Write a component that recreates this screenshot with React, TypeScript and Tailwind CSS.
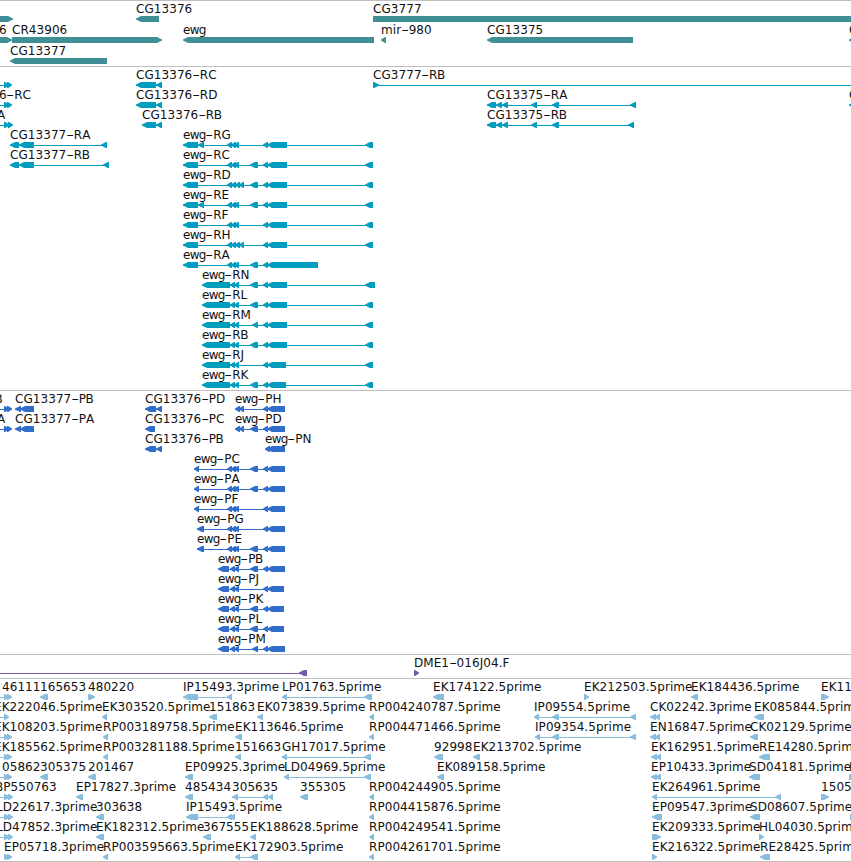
type Exon = [number, number];

interface Feature {
  x: number;
  label?: string;
  dir?: "l" | "r";
  exons?: Exon[];
  /** x range of the connecting line, when it runs past the exons */
  line?: Exon;
}

interface Track {
  name: string;
  color: string;
  rowClass: string;
  padClass: string;
  rows: Feature[][];
}

const left = (label: string, ...exons: Exon[]): Feature => ({ x: exons[0][0], label, exons });
const right = (label: string, ...exons: Exon[]): Feature => ({ x: exons[0][0], label, exons, dir: "r" });
const cut = (x: number, label: string, exons: Exon[]): Feature => ({
  x,
  label,
  exons,
  dir: "r",
  line: [0, exons[0][0]],
});

const TWO: Exon[] = [[4, 9], [7, 12]];
const TWO_WIDE: Exon[] = [[4, 10], [8, 13]];

const TRIPLE: Exon[] = [[227, 232], [231, 236], [234, 239]];
const QUAD: Exon[] = [[227, 232], [231, 236], [235, 240], [239, 244]];
const PAIR: Exon[] = [[230, 235], [234, 239]];
const MID: Exon = [250, 258];
const MID_SHORT: Exon = [252, 258];
const PRE: Exon = [263, 268];
const BODY: Exon = [267, 287];
const BODY_SHORT: Exon = [267, 286];
const END: Exon = [365, 373];
const START: Exon = [183, 198];
const SMALL: Exon = [198, 204];
const LONG_START: Exon = [202, 230];

const P_BODY: Exon = [267, 285];
const P_BODY_SHORT: Exon = [267, 284];
const P_START: Exon = [218, 229];

const genes: Feature[][] = [
  [
    { x: 0, dir: "r", exons: [[-10, 13]] },
    left("CG13376", [136, 159]),
    { x: 373, label: "CG3777", dir: "r", exons: [[373, 870]] },
  ],
  [
    { x: -1, label: "6", dir: "r", exons: [[-10, 12]] },
    right("CR43906", [12, 162]),
    left("ewg", [183, 374]),
    left("mir-980", [381, 386]),
    left("CG13375", [487, 633]),
    left("C", [849, 880]),
  ],
  [left("CG13377", [10, 107])],
];

const transcripts: Feature[][] = [
  [
    cut(0, "", TWO),
    left("CG13376-RC", [136, 156], [156, 162]),
    { x: 373, label: "CG3777-RB", dir: "r", exons: [[373, 379]], line: [373, 851] },
  ],
  [
    cut(-1, "6-RC", TWO),
    left("CG13376-RD", [136, 156], [156, 162]),
    left("CG13375-RA", [487, 496], [496, 502], [502, 508], [531, 537], [552, 559], [630, 636]),
    left("C", [849, 880]),
  ],
  [
    cut(-3, "A", TWO_WIDE),
    left("CG13376-RB", [142, 156], [156, 162]),
    left("CG13375-RB", [487, 496], [496, 502], [502, 508], [531, 537], [552, 559], [628, 634]),
  ],
  [left("CG13377-RA", [10, 19], [19, 34], [101, 107]), left("ewg-RG", START, SMALL, ...TRIPLE, PRE, BODY, END)],
  [left("CG13377-RB", [10, 19], [19, 34], [103, 109]), left("ewg-RC", START, ...TRIPLE, MID, PRE, BODY, END)],
  [left("ewg-RD", START, ...QUAD, MID, PRE, BODY, END)],
  [left("ewg-RE", START, SMALL, ...TRIPLE, MID, PRE, BODY, END)],
  [left("ewg-RF", START, ...TRIPLE, PRE, BODY, END)],
  [left("ewg-RH", START, ...QUAD, PRE, BODY, END)],
  [left("ewg-RA", START, ...TRIPLE, MID, PRE, [267, 318])],
  [left("ewg-RN", LONG_START, ...PAIR, MID, PRE, BODY, [365, 375])],
  [left("ewg-RL", LONG_START, ...PAIR, MID, PRE, BODY, END)],
  [left("ewg-RM", LONG_START, ...PAIR, MID_SHORT, PRE, BODY, END)],
  [left("ewg-RB", LONG_START, ...PAIR, MID, PRE, BODY, END)],
  [left("ewg-RJ", LONG_START, ...PAIR, PRE, BODY_SHORT, END)],
  [left("ewg-RK", LONG_START, ...PAIR, MID, PRE, BODY_SHORT, END)],
];

const proteins: Feature[][] = [
  [
    cut(-5, "B", TWO),
    left("CG13377-PB", [15, 21], [20, 34]),
    left("CG13376-PD", [145, 156], [156, 162]),
    left("ewg-PH", [235, 240], [239, 244], PRE, P_BODY),
  ],
  [
    cut(-3, "A", TWO),
    left("CG13377-PA", [15, 21], [20, 34]),
    left("CG13376-PC", [145, 155]),
    left("ewg-PD", [235, 240], [239, 244], MID, PRE, P_BODY),
  ],
  [left("CG13376-PB", [145, 156], [156, 162]), left("ewg-PN", [265, 270], P_BODY)],
  [left("ewg-PC", [194, 199], ...TRIPLE, MID, PRE, P_BODY)],
  [left("ewg-PA", [194, 199], ...TRIPLE, MID, PRE, P_BODY)],
  [left("ewg-PF", [194, 199], ...TRIPLE, PRE, P_BODY)],
  [left("ewg-PG", [197, 204], ...TRIPLE, PRE, P_BODY)],
  [left("ewg-PE", [197, 204], ...TRIPLE, MID, PRE, P_BODY)],
  [left("ewg-PB", P_START, ...PAIR, MID, PRE, P_BODY)],
  [left("ewg-PJ", P_START, ...PAIR, PRE, P_BODY_SHORT)],
  [left("ewg-PK", P_START, ...PAIR, MID, PRE, P_BODY_SHORT)],
  [left("ewg-PL", P_START, ...PAIR, MID, PRE, P_BODY_SHORT)],
  [left("ewg-PM", P_START, ...PAIR, MID_SHORT, PRE, P_BODY)],
];

const clones: Feature[][] = [
  [{ x: 0, exons: [[299, 307]], line: [0, 300] }, right("DME1-016J04.F", [414, 419])],
];

const ests: Feature[][] = [
  [
    cut(2, "46111", TWO),
    left("165653", [40, 48]),
    right("480220", [88, 95]),
    left("IP15493.3prime", [183, 198], [227, 232]),
    left("LP01763.5prime", [282, 287], [364, 372]),
    left("EK174122.5prime", [433, 444]),
    right("EK212503.5prime", [584, 589]),
    left("EK184436.5prime", [691, 698]),
    right("EK112345", [821, 829]),
  ],
  [
    cut(-6, "EK222046.5prime", [[4, 9]]),
    left("EK303520.5prime", [102, 107]),
    left("151863", [209, 217]),
    left("EK073839.5prime", [257, 263]),
    left("RP004240787.5prime", [369, 374]),
    left("IP09554.5prime", [534, 539], [552, 559], [630, 636]),
    left("CK02242.3prime", [650, 656], [655, 660]),
    left("EK085844.5prime", [754, 764]),
  ],
  [
    cut(-6, "EK108203.5prime", TWO),
    left("RP003189758.5prime", [103, 108]),
    left("EK113646.5prime", [235, 242]),
    left("RP004471466.5prime", [369, 374]),
    left("IP09354.5prime", [535, 540], [552, 559], [630, 636]),
    left("EN16847.5prime", [650, 656], [655, 660]),
    left("CK02129.5prime", [750, 758]),
  ],
  [
    cut(-6, "EK185562.5prime", TWO),
    left("RP003281188.5prime", [103, 108]),
    left("151663", [235, 241]),
    left("GH17017.5prime", [282, 287], [364, 371]),
    left("92998", [434, 443]),
    left("EK213702.5prime", [473, 480]),
    left("EK162951.5prime", [651, 657], [656, 661]),
    left("RE14280.5prime", [759, 770]),
  ],
  [
    cut(2, "05862", TWO),
    left("305375", [40, 48]),
    left("201467", [88, 96]),
    left("EP09925.3prime", [185, 193]),
    left("LD04969.5prime", [284, 289], [364, 371]),
    left("EK089158.5prime", [437, 444]),
    left("EP10433.3prime", [651, 657], [656, 661]),
    left("SD04181.5prime", [749, 760]),
    right("H", [849, 854]),
  ],
  [
    cut(-5, "BP550763", TWO_WIDE),
    left("EP17827.3prime", [76, 83]),
    left("485434", [185, 193]),
    left("305635", [232, 238], [263, 268], [268, 273]),
    left("355305", [300, 308]),
    left("RP004244905.5prime", [369, 374]),
    left("EK264961.5prime", [652, 657], [775, 781]),
    right("150512", [821, 829]),
  ],
  [
    cut(-4, "LD22617.3prime", TWO_WIDE),
    left("303638", [96, 104]),
    left("IP15493.5prime", [186, 198], [227, 232], [230, 235]),
    left("RP004415876.5prime", [369, 374]),
    left("EP09547.3prime", [652, 662]),
    left("SD08607.5prime", [750, 760]),
    { x: 850, dir: "r", exons: [[850, 856]] },
  ],
  [
    cut(-4, "LD47852.3prime", TWO_WIDE),
    left("EK182312.5prime", [96, 104]),
    left("367555", [203, 211]),
    left("EK188628.5prime", [250, 256]),
    left("RP004249541.5prime", [369, 374]),
    right("EK209333.5prime", [652, 661]),
    right("HL04030.5prime", [759, 764]),
  ],
  [
    right("EP05718.3prime", ...TWO),
    left("RP003595663.5prime", [103, 108]),
    left("EK172903.5prime", [235, 240], [250, 258]),
    left("RP004261701.5prime", [369, 374]),
    right("EK216322.5prime", [652, 657]),
    left("RE28425.5prime", [760, 770]),
  ],
];

const tracks: Track[] = [
  { name: "genes", color: "#3f8f95", rowClass: "h-[21px]", padClass: "pb-[2px]", rows: genes },
  { name: "transcripts", color: "#009dbf", rowClass: "h-5", padClass: "pb-[3px]", rows: transcripts },
  { name: "proteins", color: "#316ecb", rowClass: "h-5", padClass: "pb-[3px]", rows: proteins },
  { name: "clones", color: "#7757a8", rowClass: "h-5", padClass: "pb-[3px]", rows: clones },
  { name: "ests", color: "#88bddd", rowClass: "h-5", padClass: "pb-[2px]", rows: ests },
];

/** Arrow-shaped block, 6px high. Short blocks are plain triangles with a flat back. */
function arrowPoints([a, b]: Exon, dir: "l" | "r") {
  const tip = dir === "l" ? a : b;
  const tail = dir === "l" ? b : a;
  const s = dir === "l" ? 1 : -1;
  const head = Math.min(5, b - a - 1);
  return [
    [tip, 2.4],
    [tip + head * s, 0],
    [tail, 0],
    [tail, 6],
    [tip + head * s, 6],
    [tip, 3.6],
  ]
    .map((p) => p.join(","))
    .join(" ");
}

function Glyph({ feature }: { feature: Feature }) {
  const { exons = [], dir = "l" } = feature;
  const span: Exon | undefined =
    feature.line ?? (exons.length > 1 ? [exons[0][0], exons[exons.length - 1][1]] : undefined);
  return (
    <g>
      {span && <rect x={span[0]} y={3} width={span[1] - span[0]} height={1} />}
      {exons.map((exon, i) => (
        <polygon key={i} points={arrowPoints(exon, dir)} />
      ))}
    </g>
  );
}

/** Label text: tight gene symbol, wide hyphen, narrow B in the isoform suffix. */
function Label({ text }: { text: string }) {
  return (
    <>
      {text.split(/(ewg|-|B$)/).map((part, i) => {
        if (part === "ewg") return <span key={i} className="tracking-[-0.7px]">{part}</span>;
        if (part === "-")
          return (
            <span key={i} className="inline-block w-[7.5px] text-center tracking-normal">
              <span className="inline-block scale-x-[1.8]">{part}</span>
            </span>
          );
        if (part === "B") return <span key={i} className="-ml-[0.5px]">{part}</span>;
        return part;
      })}
    </>
  );
}

function Row({ features, color, className }: { features: Feature[]; color: string; className: string }) {
  return (
    <div className={`relative overflow-x-clip pt-[15px] ${className}`}>
      <svg width={851} height={6} viewBox="0 0 851 6" fill={color} className="block">
        {features.map((f, i) => (
          <Glyph key={i} feature={f} />
        ))}
      </svg>
      {features.map(
        (f, i) =>
          f.label && (
            <span key={i} className="absolute top-[2px] whitespace-nowrap" style={{ left: f.x }}>
              <Label text={f.label} />
            </span>
          ),
      )}
    </div>
  );
}

export default function App() {
  return (
    <main className="h-[862px] w-[851px] overflow-hidden border-b border-[#bfbfbf] bg-white font-['DejaVu_Sans',sans-serif] text-[12px] leading-none tracking-[0.06px] text-[#111] [font-kerning:none]">
      {tracks.map((track) => (
        <section key={track.name} className={`border-t border-[#bfbfbf] ${track.padClass}`}>
          {track.rows.map((features, i) => (
            <Row key={i} features={features} color={track.color} className={track.rowClass} />
          ))}
        </section>
      ))}
    </main>
  );
}
